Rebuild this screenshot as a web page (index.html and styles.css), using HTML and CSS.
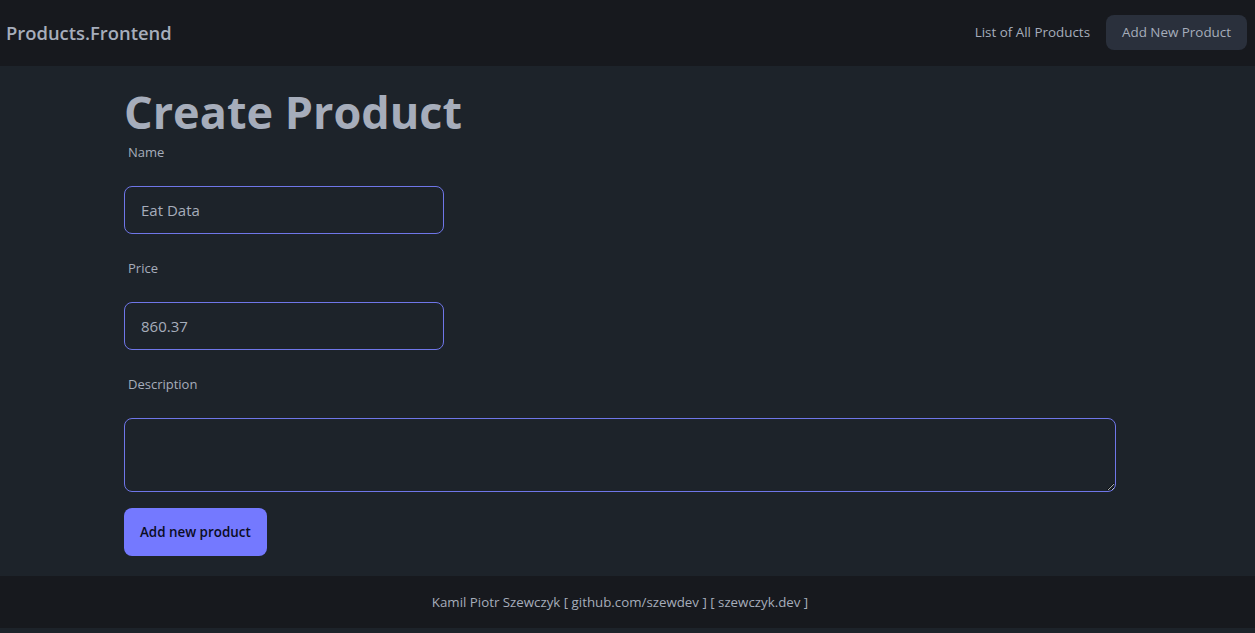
FILE: index.html
```html
<!DOCTYPE html>
<html lang="en">
<head>
<meta charset="utf-8">
<title>Create Product</title>
<link rel="stylesheet" href="styles.css">
</head>
<body>
<header class="navbar">
  <a class="brand" href="#">Products.Frontend</a>
  <nav class="nav-links">
    <a class="nav-link" href="#">List of All Products</a>
    <a class="nav-link active" href="#">Add New Product</a>
  </nav>
</header>
<main class="main">
  <h1 class="title">Create Product</h1>
  <form class="form">
    <label class="label"><span class="label-text">Name</span></label>
    <input class="input" type="text" value="Eat Data">
    <label class="label"><span class="label-text">Price</span></label>
    <input class="input" type="text" value="860.37">
    <label class="label"><span class="label-text">Description</span></label>
    <textarea class="textarea"></textarea>
    <button class="btn-primary" type="button">Add new product</button>
  </form>
</main>
<footer class="footer">
  <p>Kamil Piotr Szewczyk [ github.com/szewdev ] [ szewczyk.dev ]</p>
</footer>
</body>
</html>
```
FILE: styles.css
```css
* { box-sizing: border-box; }
html, body {
  margin: 0;
  padding: 0;
  background: #1d232a;
  color: #a6adbb;
  font-family: "Open Sans", "Noto Sans", sans-serif;
}
a { color: inherit; text-decoration: none; }

.navbar {
  height: 66px;
  background: #17191e;
  display: flex;
  align-items: center;
  justify-content: space-between;
  padding: 0 8px 2px 6px;
}
.brand {
  font-size: 18.4px;
  font-weight: 600;
}
.nav-links {
  display: flex;
  align-items: center;
}
.nav-link {
  font-size: 13.4px;
  height: 35px;
  display: flex;
  align-items: center;
  padding: 0 16px;
  border-radius: 8px;
}
.nav-link.active {
  background: #2a303c;
}

.main {
  padding: 23px 0 20px 124px;
}
.title {
  margin: 0;
  font-size: 45px;
  line-height: 45px;
  font-weight: 700;
}
.form {
  display: flex;
  flex-direction: column;
  align-items: flex-start;
  gap: 16px;
  width: 992px;
}
.label {
  display: block;
  padding: 8px 4px;
}
.label-text {
  display: block;
  font-size: 13px;
  line-height: 20px;
}
.input {
  width: 320px;
  height: 48px;
  background: #1d232a;
  border: 1px solid #6f76e8;
  border-radius: 8px;
  padding: 0 16px;
  color: #a6adbb;
  font-family: inherit;
  font-size: 15px;
  outline: none;
}
.textarea {
  width: 992px;
  height: 74px;
  background: #1d232a;
  border: 1px solid #6f76e8;
  border-radius: 8px;
  color: #a6adbb;
  font-family: inherit;
  font-size: 14px;
  padding: 8px 16px;
  outline: none;
}
.btn-primary {
  height: 48px;
  padding: 0 16px;
  background: #7479ff;
  color: #0b0d24;
  border: none;
  border-radius: 8px;
  font-family: inherit;
  font-size: 13.4px;
  font-weight: 600;
}

.footer {
  height: 52px;
  background: #17191e;
  display: flex;
  align-items: center;
  justify-content: center;
  padding-right: 15px;
}
.footer p {
  margin: 0;
  font-size: 13.3px;
}
```
